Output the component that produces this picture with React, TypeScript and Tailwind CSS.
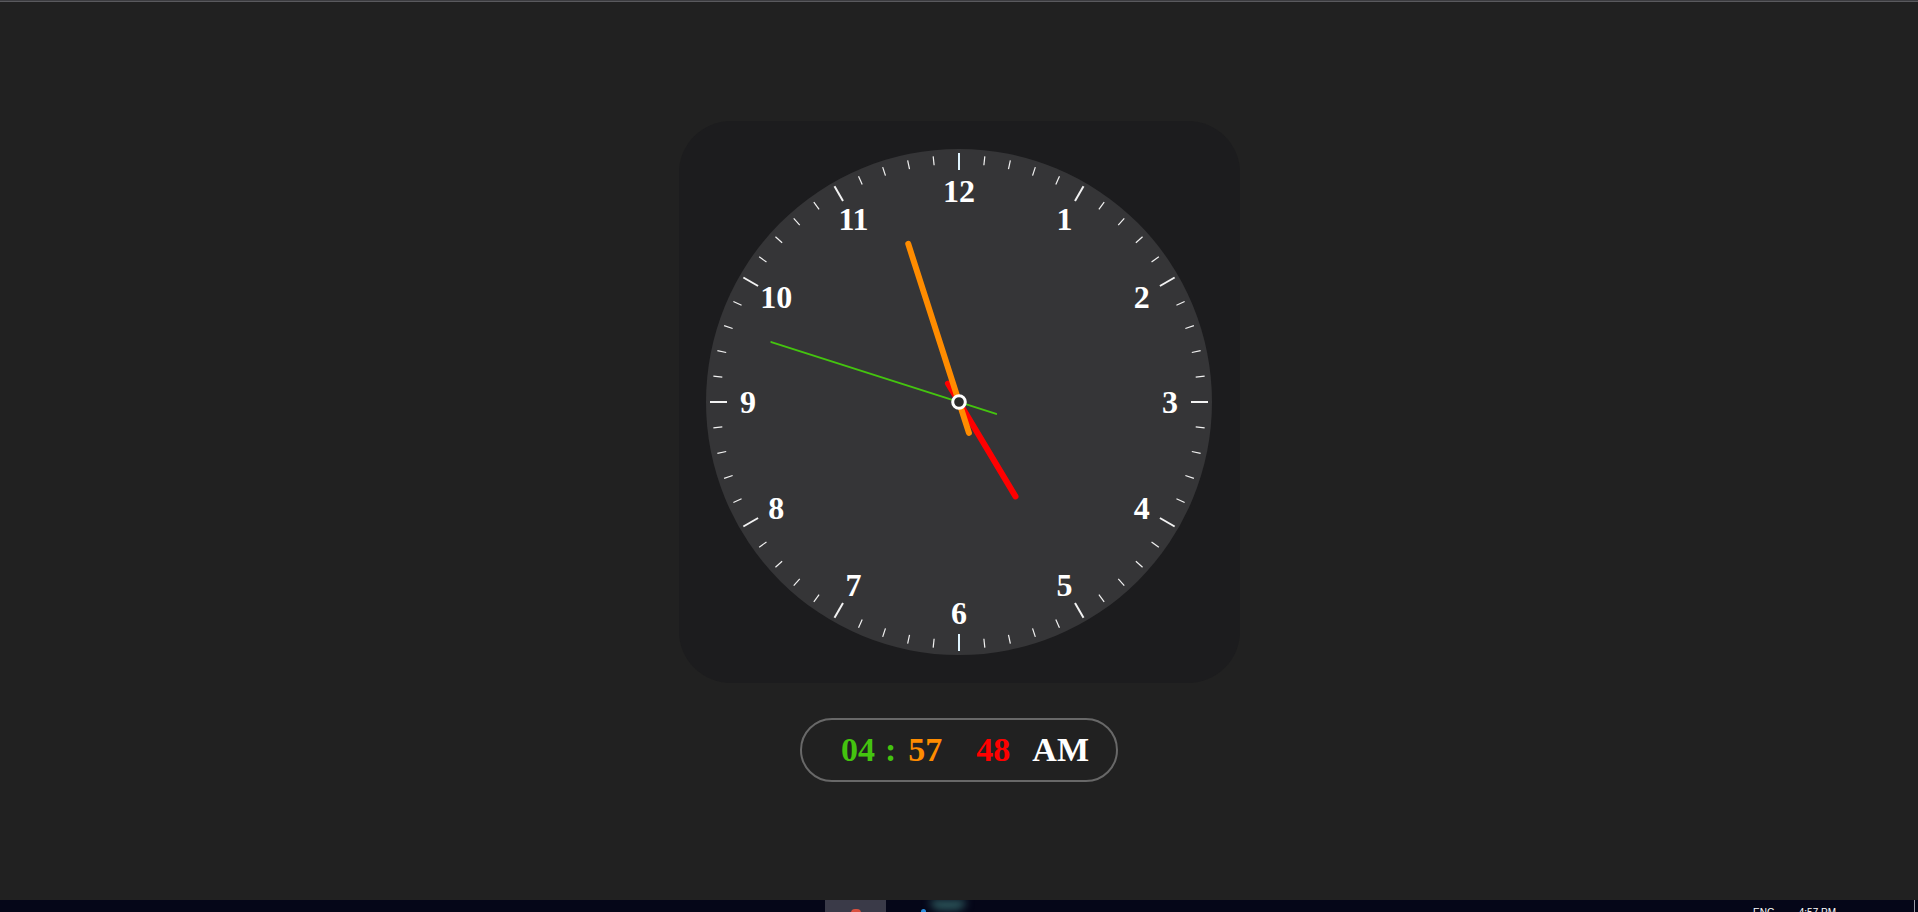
const C = 253

function pt(angle: number, r: number) {
  const a = (angle * Math.PI) / 180
  return { x: C + r * Math.sin(a), y: C - r * Math.cos(a) }
}

function Hand({ angle, len, tail, width, color }: { angle: number; len: number; tail: number; width: number; color: string }) {
  const a = pt(angle, len)
  const b = pt(angle + 180, tail)
  return <line x1={b.x} y1={b.y} x2={a.x} y2={a.y} stroke={color} strokeWidth={width} strokeLinecap="round" />
}

function Face() {
  const ticks = Array.from({ length: 60 }, (_, i) => i)
  const nums = Array.from({ length: 12 }, (_, i) => i + 1)
  return (
    <svg width={506} height={506} viewBox="0 0 506 506" className="block">
      <circle cx={C} cy={C} r={253} fill="#353537" />
      {ticks.map((i) => {
        const major = i % 5 === 0
        const a = pt(i * 6, major ? 249 : 247)
        const b = pt(i * 6, major ? 232 : 238)
        return (
          <line
            key={i}
            x1={a.x}
            y1={a.y}
            x2={b.x}
            y2={b.y}
            stroke={i % 30 === 0 ? '#dff4ff' : '#f2f2f2'}
            strokeWidth={major ? 2 : 1.2}
          />
        )
      })}
      {nums.map((n) => {
        const p = pt(n * 30, 211)
        return (
          <text
            key={n}
            x={p.x}
            y={p.y}
            textAnchor="middle"
            dominantBaseline="central"
            className="fill-white font-bold text-[32px] font-['Liberation_Serif',serif]"
          >
            {n}
          </text>
        )
      })}
      {/* hands */}
      <Hand angle={149.1} len={110} tail={21.5} width={6} color="#ff0000" />
      <Hand angle={342.2} len={166} tail={32.5} width={6} color="#ff8c00" />
      <Hand angle={287.7} len={197} tail={39} width={2} color="#44c40f" />
      <circle cx={C} cy={C} r={6.3} fill="#2b2b2b" stroke="#ffffff" strokeWidth={3} />
    </svg>
  )
}

function Taskbar() {
  return (
    <div className="h-[12px] bg-[#050618] flex overflow-hidden relative">
      <div className="w-[825px]" />
      <div className="w-[61px] bg-[#3a3a48] flex justify-center">
        <div className="w-[10px] h-[4px] mt-[9px] rounded-t-full bg-[#d9503f]" />
      </div>
      <div className="w-[35px]" />
      <div className="w-[5px] h-[4px] mt-[9px] rounded-t-full bg-[#2c8fe0]" />
      <div className="w-[36px] h-[10px] ml-[4px] rounded-b-full bg-[#2e5a5e] blur-[4px]" />
      <div className="flex-1" />
      <div className="text-[10px] leading-none pt-[8px] text-white font-['Liberation_Sans',sans-serif] flex gap-[24px] mr-[78px]">
        <span>ENG</span>
        <span>4:57 PM</span>
      </div>
      <div className="w-px bg-[#9a9aa6] mr-[3px]" />
    </div>
  )
}

export default function App() {
  return (
    <div className="w-[1918px] h-[912px] bg-[#212121] flex flex-col overflow-hidden">
      <div className="h-px bg-[#3c3c40]" />
      <div className="h-px bg-[#5a5a5e]" />
      <div className="flex-1 flex flex-col items-center pt-[119px]">
        <div className="w-[561px] h-[562px] rounded-[52px] bg-[#1c1c1e] flex items-center justify-center">
          <Face />
        </div>
        <div className="mt-[35px] w-[318px] h-[64px] rounded-full border-2 border-[#686868] flex items-center pl-[39px] font-['Liberation_Serif',serif] font-bold text-[34px] leading-none">
          <span className="text-[#44c40f]">04</span>
          <span className="text-[#44c40f] ml-[10px]">:</span>
          <span className="text-[#ff8c00] ml-[12px]">57</span>
          <span className="text-[#ff0000] ml-[34px]">48</span>
          <span className="text-white ml-[22px]">AM</span>
        </div>
      </div>
      <Taskbar />
    </div>
  )
}
